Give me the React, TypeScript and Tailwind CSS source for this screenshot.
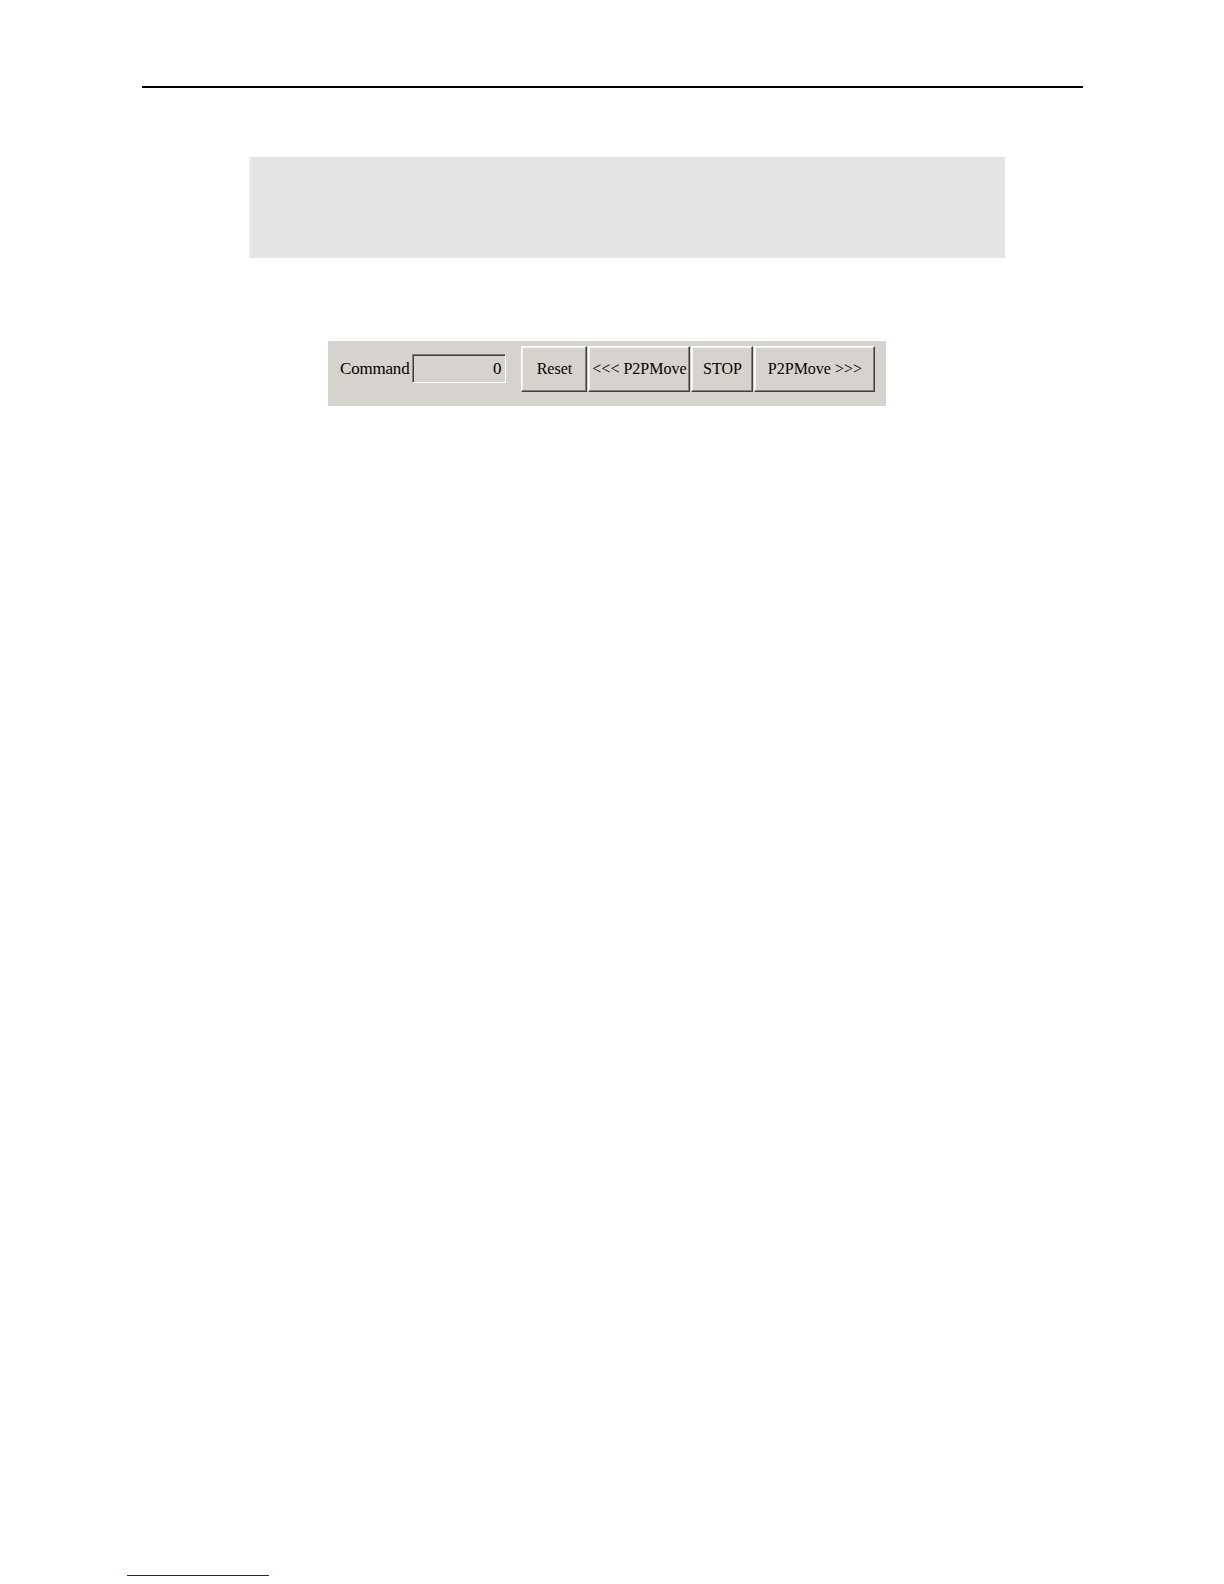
const serif = { fontFamily: '"Liberation Serif", "Times New Roman", serif' };

function WinButton({ label, width }: { label: string; width: string }) {
  return (
    <button
      className={`${width} h-[46px] flex items-center justify-center border border-t-white border-l-white border-r-[#404040] border-b-[#404040] shadow-[inset_-1px_-1px_0_#808080,inset_1px_1px_0_#f4f3f0] bg-[#d6d3ce] text-[16px] text-black leading-none`}
    >
      {label}
    </button>
  );
}

export default function App() {
  return (
    <div className="w-[1224px] h-[1584px] bg-white flex flex-col" style={serif}>
      {/* page header rule */}
      <div className="mt-[86px] ml-[142px] w-[941px] h-[2px] bg-black" />

      {/* grey code block */}
      <div className="mt-[69px] ml-[249px] w-[756px] h-[101px] bg-[#e4e4e4] border-l-2 border-[#ececec]" />

      {/* toolbar screenshot */}
      <div className="mt-[83px] ml-[328px] w-[558px] h-[65px] bg-[#d6d3ce] flex items-center pb-[10px] pl-[12px]">
        <span className="text-[17px] text-black tracking-[-0.2px]">Command</span>
        <div className="ml-[3px] w-[94px] h-[29px] border border-t-[#808080] border-l-[#808080] border-r-white border-b-white shadow-[inset_1px_1px_0_#404040] bg-[#d6d3ce] flex items-center justify-end pr-[4px] text-[17px] text-black">
          0
        </div>
        <div className="ml-[15px] flex gap-[1px]">
          <WinButton label="Reset" width="w-[66px]" />
          <WinButton label="<<< P2PMove" width="w-[102px]" />
          <WinButton label="STOP" width="w-[62px]" />
          <WinButton label="P2PMove >>>" width="w-[121px]" />
        </div>
      </div>

      {/* footnote rule */}
      <div className="mt-auto mb-[8px] ml-[127px] w-[142px] h-[1px] bg-[#1a1a80]" />
    </div>
  );
}
